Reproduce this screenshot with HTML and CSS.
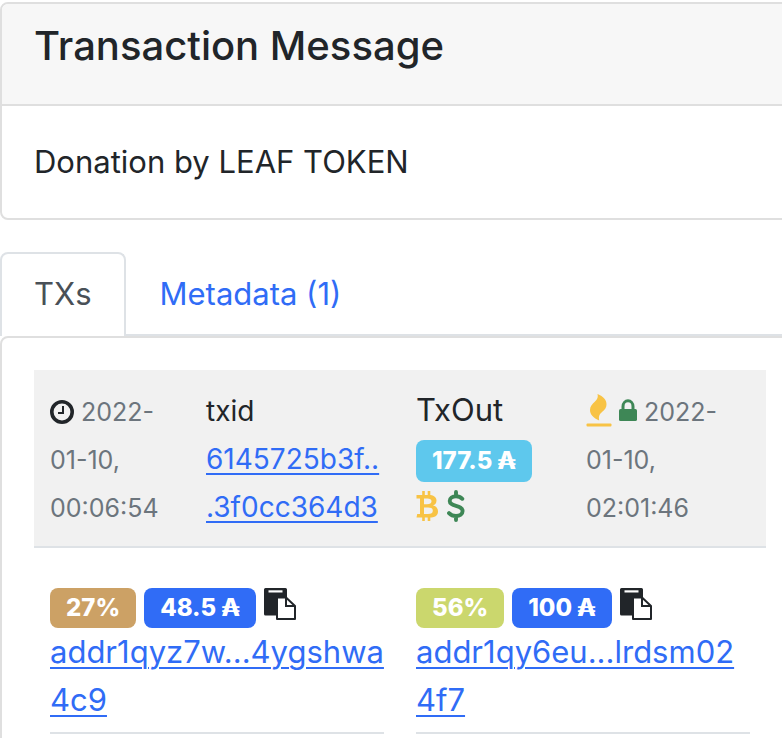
FILE: index.html
```html
<!DOCTYPE html>
<html lang="en">
<head>
<meta charset="utf-8">
<title>Transaction Message</title>
<link rel="stylesheet" href="styles.css">
</head>
<body>
<svg class="sprite" aria-hidden="true">
  <symbol id="clock" viewBox="0 0 24 24"><circle cx="12" cy="12" r="10.2" fill="none" stroke="currentColor" stroke-width="3.6"/><path d="M13 6v7H8" fill="none" stroke="currentColor" stroke-width="2"/></symbol>
  <symbol id="bitcoin" viewBox="0 0 22 30"><path d="M0.500 4h12c5 0 8 2 8 5.500c0 2.500-1.300 4.200-3.500 5c3.200.7 5 2.800 5 5.900c0 4.200-3.300 6.200-8.500 6.200H0.500l.7-3.600H4V7.500H0.500zM8 7.500v5.700h3c3 0 4.500-.9 4.500-2.900s-1.500-2.800-4.300-2.800zM8 16.500V23h4c3.200 0 4.800-1 4.800-3.300S15 16.500 12 16.500z" fill="currentColor" fill-rule="evenodd"/><path d="M7.500 0v5M13 0v5M7.500 25.500v4.500M13 25.500v4.500" stroke="currentColor" stroke-width="2.600"/></symbol>
  <symbol id="dollar" viewBox="0 0 18 32"><path d="M15.300 8.800C13.500 7 11.300 6.200 9 6.200c-3.600 0-6.300 1.800-6.300 4.700c0 6.300 12.900 3.600 12.900 10.200c0 3.100-2.700 4.900-6.600 4.900c-2.800 0-5.200-1-7-2.900M9 2v4M9 26v4" fill="none" stroke="currentColor" stroke-width="3.900" stroke-linejoin="round" stroke-linecap="round"/></symbol>
  <symbol id="fire" viewBox="0 0 26 34"><path d="M11.500 1c6 2.500 9 6 9 10.500c0 3-1.500 5-4.500 7.500c-2.800 2.400-3.500 4.500-2.800 8.500C7.500 25 4 21.500 4 17c0-3.500 2-5.600 5-8.500C11.500 6 12.300 4 11.500 1z" fill="currentColor"/><rect x="0.500" y="30.500" width="25" height="3" rx="1" fill="currentColor"/></symbol>
  <symbol id="lock" viewBox="0 0 18 22"><path d="M4 11V7.500a5 5.700 0 0 1 10 0V11" fill="none" stroke="currentColor" stroke-width="3"/><rect y="10" width="18" height="12" rx="1.600" fill="currentColor"/></symbol>
  <symbol id="paste" viewBox="0 0 32 32"><path d="M1.500 0h20A1.500 1.500 0 0 1 23 1.500V9H14.500A2.500 2.500 0 0 0 12 11.500V27.500H1.500A1.500 1.500 0 0 1 0 26V1.500A1.500 1.500 0 0 1 1.500 0z" fill="currentColor"/><rect x="4.500" y="2.300" width="14" height="2.200" fill="#fff"/><path d="M13 9.500h9L31 18v13H13z" fill="#fff" stroke="currentColor" stroke-width="2" stroke-linejoin="round"/><path d="M22 9.500V18h9" fill="none" stroke="currentColor" stroke-width="2"/></symbol>
</svg>
<main class="page">
  <section class="card message">
    <header class="card-header"><h1>Transaction Message</h1></header>
    <p class="card-body">Donation by LEAF TOKEN</p>
  </section>
  <nav class="tabs">
    <a class="tab active" href="#txs">TXs</a>
    <a class="tab" href="#metadata">Metadata (1)</a>
  </nav>
  <section class="card card-body" id="txs">
    <table class="txs">
      <colgroup><col class="col-time"><col class="col-id"><col class="col-out"><col></colgroup>
      <thead>
        <tr>
          <td><div class="date"><svg class="icon clock"><use href="#clock"/></svg> 2022-01-10, 00:06:54</div></td>
          <td><span class="txid">txid <a href="#tx">6145725b3f..<wbr>.3f0cc364d3</a></span></td>
          <td>
            <div class="out">TxOut</div>
            <div class="line"><span class="badge total">177.5 ₳</span></div>
            <div class="line coins"><svg class="icon bitcoin"><use href="#bitcoin"/></svg><svg class="icon dollar"><use href="#dollar"/></svg></div>
          </td>
          <td><div class="date"><svg class="icon fire"><use href="#fire"/></svg> <svg class="icon lock"><use href="#lock"/></svg> 2022-01-10, 02:01:46</div></td>
        </tr>
      </thead>
      <tbody>
        <tr>
          <td colspan="2">
            <div class="entry">
              <div class="badges"><span class="badge tan">27%</span><span class="badge blue">48.5 ₳</span><button class="copy" type="button" aria-label="Copy address"><svg class="icon paste"><use href="#paste"/></svg></button></div>
              <a href="#in">addr1qyz7w...4ygshwa4c9</a>
            </div>
          </td>
          <td colspan="2">
            <div class="entry">
              <div class="badges"><span class="badge lime">56%</span><span class="badge blue">100 ₳</span><button class="copy" type="button" aria-label="Copy address"><svg class="icon paste"><use href="#paste"/></svg></button></div>
              <a href="#out">addr1qy6eu...lrdsm024f7</a>
            </div>
          </td>
        </tr>
      </tbody>
    </table>
  </section>
</main>
</body>
</html>
```
FILE: styles.css
```css
* { box-sizing: border-box; }
body {
  margin: 0;
  height: 100vh;
  overflow: hidden;
  background: #fff;
  color: #212529;
  font: 31px/48px Inter, "Liberation Sans", sans-serif;
}
.sprite { display: none; }
.page { margin: 2px -18px 0 0; }
a { color: #306cf6; text-decoration-thickness: 2px; text-underline-offset: 4px; }
.card { border: 2px solid #dfdfdf; border-radius: 8px; background: #fff; }
.card-header {
  padding: 16px 32px;
  background: #f7f7f7;
  border-bottom: 2px solid #dfdfdf;
  border-radius: 6px 6px 0 0;
}
h1 { margin: 0 0 16px; font-size: 40px; line-height: 52px; font-weight: 550; }
.card-body { margin: 0; padding: 32px; }
.tabs { display: flex; margin-top: 32px; border-bottom: 2px solid #dee2e6; }
.tab {
  padding: 16px 32px;
  border: 2px solid transparent;
  border-bottom: 0;
  border-radius: 8px 8px 0 0;
  text-decoration: none;
}
.tab.active { color: #495057; border-color: #dee2e6; background: #fff; margin-bottom: -2px; padding-bottom: 18px; }
.txs { width: 100%; table-layout: fixed; border-collapse: separate; border-spacing: 0; }
.col-time { width: 156px; }
.col-id { width: 210px; }
.col-out { width: 170px; }
td { padding: 16px; vertical-align: top; overflow-wrap: anywhere; }
thead td { background: #f1f1f1; border-bottom: 2px solid #dee2e6; }
.date { color: #6c757d; font-size: 25px; padding-top: 2px; margin-bottom: -2px; }
.txid { font-size: 28px; line-height: 32px; }
.line { display: flex; align-items: center; height: 48px; }
.coins { gap: 9px; }
.badge {
  padding: 0 16px;
  border-radius: 8px;
  color: #fff;
  font-size: 24px;
  line-height: 40px;
  font-weight: 800;
}
.total { background: #5ec8ed; line-height: 42px; align-self: flex-end; }
.tan { background: #cca165; }
.lime { background: #cbd76d; }
.blue { background: #306cf6; }
.entry { padding: 24px 0 8px; border-bottom: 2px solid #dee2e6; }
tbody td { padding-top: 16px; }
.badges { display: flex; gap: 8px; }
.copy { padding: 0; border: 0; background: none; color: inherit; display: flex; }
.icon { display: inline-block; }
.clock { width: 24px; height: 24px; vertical-align: -3px; color: #212529; }
.bitcoin { width: 22px; height: 30px; color: #f8c345; }
.dollar { width: 18px; height: 32px; color: #3e8756; }
.fire { width: 26px; height: 34px; color: #f8c345; vertical-align: -6px; }
.lock { width: 18px; height: 22px; color: #3e8756; }
.paste { width: 32px; height: 32px; }
```
